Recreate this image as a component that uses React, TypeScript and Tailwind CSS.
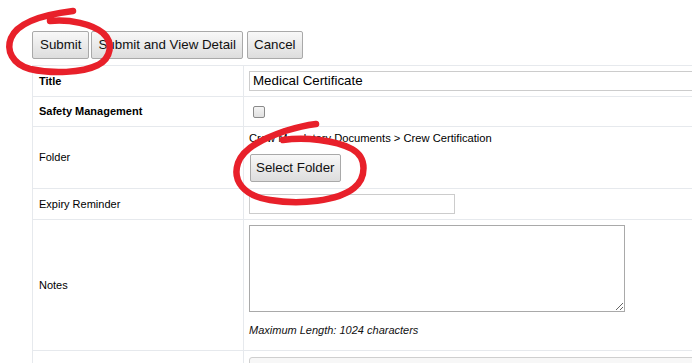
import React from "react";

const btn =
  "h-[28px] border border-[#a9a9a9] rounded-[2px] bg-gradient-to-b from-[#f8f8f8] to-[#dddddd] text-[13.33px] text-[#111] leading-none";

export default function App() {
  return (
    <div
      className="relative w-[692px] h-[363px] overflow-hidden bg-white text-black"
      style={{ fontFamily: '"Liberation Sans", Arial, sans-serif' }}
    >
      <div className="pl-[32px] pt-[31px]">
        <div className="flex">
          <button className={btn + " px-[7px]"}>Submit</button>
          <button className={btn + " px-[6px] ml-[2px]"}>Submit and View Detail</button>
          <button className={btn + " px-[6px] ml-[4px]"}>Cancel</button>
        </div>
        <div className="mt-[6px] w-[720px] border-l border-t border-[#e6e9ed] text-[11px]">
          <div className="flex border-b border-[#e6e9ed] h-[31px]">
            <div className="w-[211px] shrink-0 border-r border-[#e6e9ed] px-[6px] flex items-center font-bold">Title</div>
            <div className="flex-1 pl-[5px] flex items-center">
              <div className="w-full h-[20px] border border-[#cccccc] flex items-center px-[3px] text-[13.33px]">Medical Certificate</div>
            </div>
          </div>
          <div className="flex border-b border-[#e6e9ed] h-[30px]">
            <div className="w-[211px] shrink-0 border-r border-[#e6e9ed] px-[6px] flex items-center font-bold">Safety Management</div>
            <div className="flex-1 pl-[9px] flex items-center">
              <div className="w-[12px] h-[12px] rounded-[2px] border border-[#8a8a8a] bg-gradient-to-b from-[#f4f4f4] to-[#e0e0e0]"></div>
            </div>
          </div>
          <div className="flex border-b border-[#e6e9ed] h-[62px]">
            <div className="w-[211px] shrink-0 border-r border-[#e6e9ed] px-[6px] flex items-center">Folder</div>
            <div className="flex-1 pl-[5px] pt-[5px]">
              <div className="leading-[13px] text-[11.2px]">Crew Mandatory Documents &gt; Crew Certification</div>
              <button className={btn + " px-[5px] mt-[9px] ml-[1px]"}>Select Folder</button>
            </div>
          </div>
          <div className="flex border-b border-[#e6e9ed] h-[31px]">
            <div className="w-[211px] shrink-0 border-r border-[#e6e9ed] px-[6px] flex items-center">Expiry Reminder</div>
            <div className="flex-1 pl-[5px] flex items-center">
              <div className="w-[206px] h-[20px] border border-[#cccccc]"></div>
            </div>
          </div>
          <div className="flex border-b border-[#e6e9ed] h-[131px]">
            <div className="w-[211px] shrink-0 border-r border-[#e6e9ed] px-[6px] flex items-center">Notes</div>
            <div className="flex-1 pl-[5px] pt-[5px]">
              <textarea className="block w-[376px] h-[87px] border border-[#a9a9a9] bg-white outline-none"></textarea>
              <div className="mt-[10px] italic text-[#111]">Maximum Length: 1024 characters</div>
            </div>
          </div>
          <div className="flex h-[40px]">
            <div className="w-[211px] shrink-0 border-r border-[#e6e9ed]"></div>
            <div className="flex-1 pl-[5px] pt-[6px]">
              <div className="w-full h-[30px] border border-[#cfcfcf] rounded-tl-[3px] bg-[#f7f7f7]"></div>
            </div>
          </div>
        </div>
      </div>
      <svg
        className="absolute top-0 left-0 pointer-events-none"
        width="692"
        height="363"
        viewBox="0 0 692 363"
      >
        <path
          d="M50,21 C70,19 92,24 103,33 C114,43 111,58 98,65 C82,73 52,74 30,69 C12,64 6,50 11,38 C17,24 40,15 73,11"
          fill="none"
          stroke="#e8202a"
          strokeWidth="6.5"
          strokeLinecap="round"
        />
        <path
          d="M283,140 C305,137 335,140 352,149 C368,158 366,178 354,188 C338,201 300,205 270,200 C244,196 232,181 238,163 C244,147 265,138 285,131 C298,127 308,125 316,124"
          fill="none"
          stroke="#e8202a"
          strokeWidth="6.5"
          strokeLinecap="round"
        />
      </svg>
    </div>
  );
}
